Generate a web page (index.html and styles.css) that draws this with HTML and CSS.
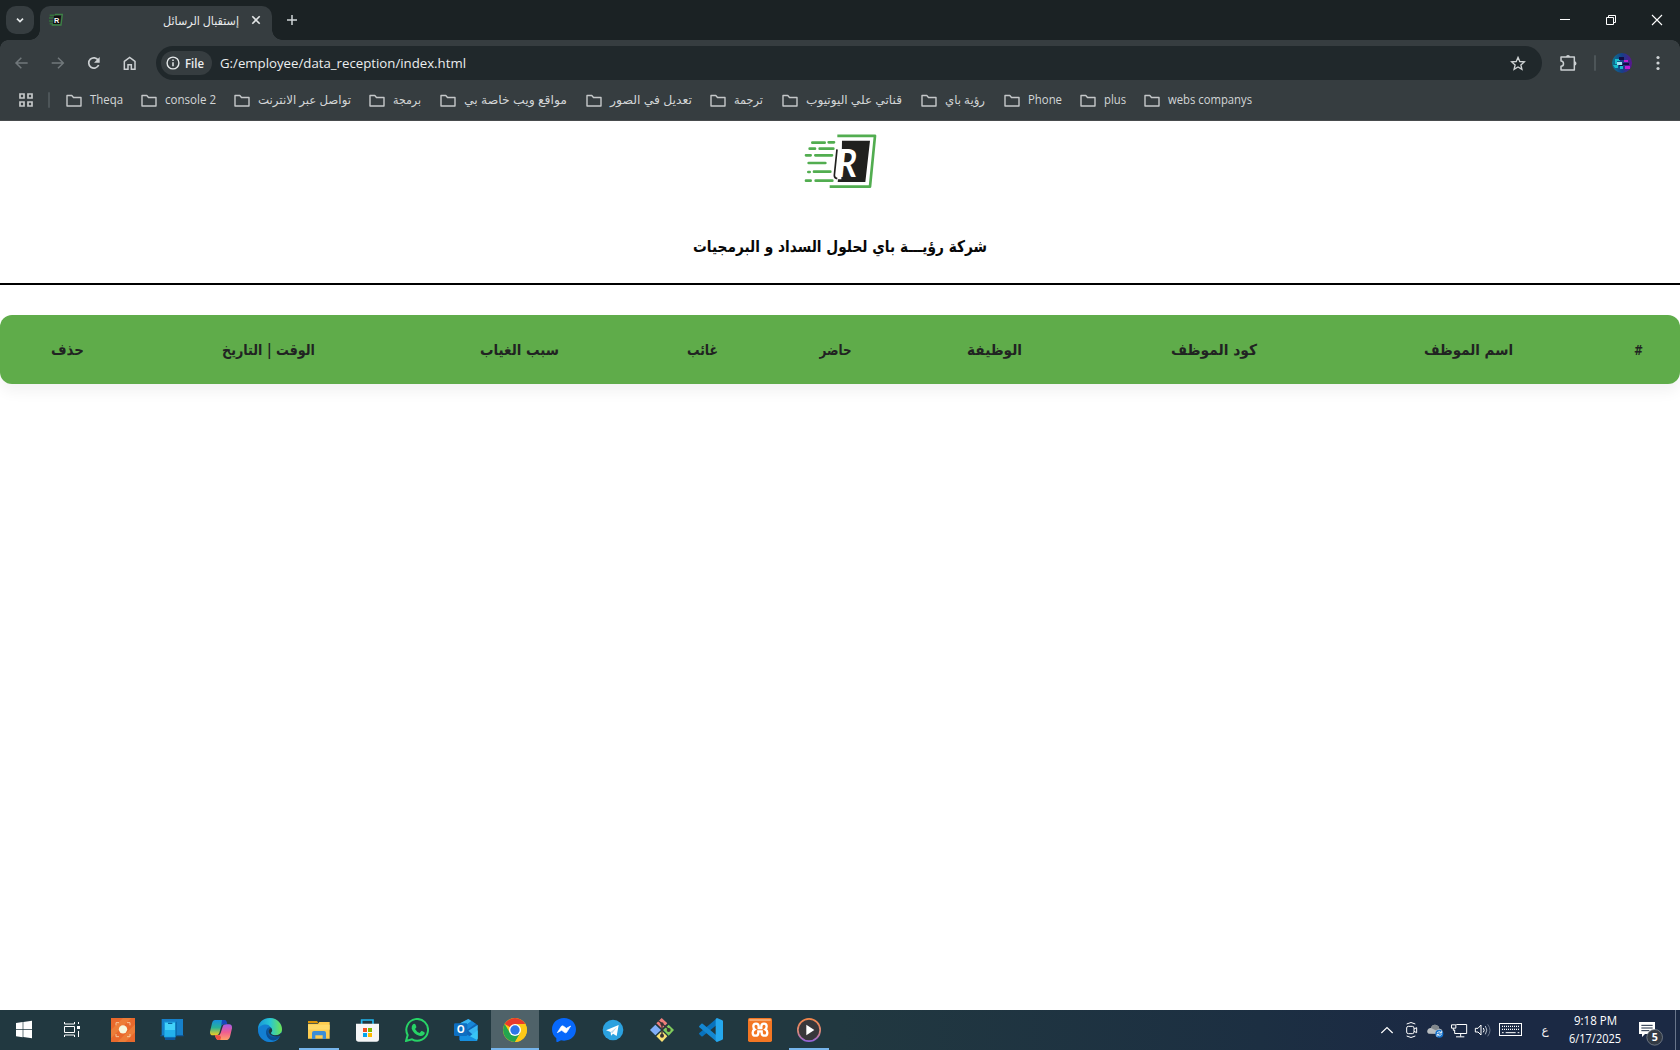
FILE: index.html
```
<!DOCTYPE html>
<html lang="ar">
<head>
<meta charset="utf-8">
<title>إستقبال الرسائل</title>
<link rel="stylesheet" href="styles.css">
</head>
<body>
<div class="titlebar">
  <button class="tab-search"><svg width="28" height="28" viewBox="18 18 84 84"><path d="M51 56l9 9 9-9" fill="none" stroke="#e4e8e9" stroke-width="5"/></svg></button>
  <div class="tab">
    <svg class="favicon" width="14" height="14" viewBox="148 40 42 42"><path d="M150 47h18M148 55h14M148 64h14M150 72h16" stroke="#35713d" stroke-width="5"/><path d="M166 44h22l-4 32h-28" fill="none" stroke="#3d8245" stroke-width="4"/><path d="M163 48h21l-3 25h-21z" fill="#111"/><text x="163" y="71" class="r-small">R</text></svg>
    <svg class="lbl title" width="76" height="22"><text x="0" y="15" textLength="76" lengthAdjust="spacingAndGlyphs">إستقبال الرسائل</text></svg>
    <svg class="close" width="10" height="10" viewBox="0 0 10 10"><path d="M1.300 1.300l7.400 7.400M8.700 1.300L1.300 8.700" stroke="#e2e5e6" stroke-width="1.600"/></svg>
  </div>
  <svg class="plus" width="12" height="12" viewBox="0 0 12 12"><path d="M6 1v10M1 6h10" stroke="#d1d6d8" stroke-width="1.500"/></svg>
  <div class="controls">
    <svg width="46" height="40"><path d="M18 19.500h10" stroke="#fff"/></svg>
    <svg width="46" height="40"><path d="M18.500 17.500h7v7h-7zM20.500 17v-1.500h7v7H26" fill="none" stroke="#fff"/></svg>
    <svg width="46" height="40"><path d="M18 15l10 10M28 15L18 25" stroke="#fff" stroke-width="1.100"/></svg>
  </div>
</div>

<div class="chrome-bars">
<div class="toolbar">
  <div class="nav">
    <svg width="36" height="36" viewBox="13 135 108 108"><path d="M84 189H50M65 173l-16 16 16 16" fill="none" stroke="#71787b" stroke-width="4.500"/></svg>
    <svg width="36" height="36" viewBox="121 135 108 108"><path d="M156 189h34M175 173l16 16-16 16" fill="none" stroke="#71787b" stroke-width="4.500"/></svg>
    <svg width="36" height="36" viewBox="229 135 108 108"><path d="M296 181A15.500 15.500 0 1 0 297 195" fill="none" stroke="#ccd0d2" stroke-width="5"/><path d="M300 171v17h-17z" fill="#ccd0d2"/></svg>
    <svg width="36" height="36" viewBox="337 135 108 108"><path d="M374 208v-24l16-12 16 12v24h-11v-14h-10v14z" fill="none" stroke="#ccd0d2" stroke-width="4.500"/></svg>
  </div>
  <div class="omnibox">
    <div class="chip"><svg width="14" height="14" viewBox="0 0 14 14"><circle cx="7" cy="7" r="5.900" fill="none" stroke="#e4e8e9" stroke-width="1.400"/><path d="M7 6.200v4M7 3.600v1.500" stroke="#e4e8e9" stroke-width="1.500"/></svg>
      <svg class="lbl file" width="19" height="18"><text x="0" y="13.500" textLength="19" lengthAdjust="spacingAndGlyphs">File</text></svg></div>
    <svg class="lbl url" width="246" height="22"><text x="0" y="16" textLength="246" lengthAdjust="spacingAndGlyphs">G:/employee/data_reception/index.html</text></svg>
    <svg class="star" width="16" height="16" viewBox="390 165 48 48"><path d="M414 172l5.300 12.500 13.700 1.200-10.400 9 3.200 13.300-11.800-7.100-11.800 7.100 3.200-13.300-10.400-9 13.700-1.200z" fill="none" stroke="#d0d4d5" stroke-width="4"/></svg>
  </div>
  <svg class="ext" width="18" height="18" viewBox="540 160 54 54"><path d="M543 169h40v39h-40v-11c10-1 10-15 0-16z" fill="none" stroke="#cbd0d2" stroke-width="4.500" stroke-linejoin="round"/><path d="M558 169a6 6 0 0 1 12 0zM583 182a6 6 0 0 1 0 13z" fill="#cbd0d2"/></svg>
  <i class="sep"></i>
  <svg class="avatar" width="20" height="20" viewBox="0 0 20 20"><defs><linearGradient id="av"><stop offset="0" stop-color="#0d7590"/><stop offset=".5" stop-color="#15418a"/><stop offset="1" stop-color="#5b1490"/></linearGradient></defs><circle cx="10" cy="10" r="10" fill="url(#av)"/><path d="M3 6h5v2H5v3H3zM1 12h5v3H3zM8 13h3v3H8z" fill="#16bccb"/><path d="M5 9h5v3H5z" fill="#9be4f2"/><path d="M12 7h4v2h-4zM13 13h5v3h-5z" fill="#c31bd3"/><path d="M7 4h5v3H7zM11 10h6v2h-6zM7 12h4v1H7z" fill="#120d45"/></svg>
  <svg class="dots" width="4" height="16"><g fill="#cfd3d5"><circle cx="2" cy="2.500" r="1.600"/><circle cx="2" cy="8" r="1.600"/><circle cx="2" cy="13.500" r="1.600"/></g></svg>
</div>

<svg class="defs"><symbol id="folder" viewBox="0 0 16 13"><path d="M1 1.500h4.800l1.700 2h7.500v8.500H1z" fill="none" stroke="#c5c8c9" stroke-width="1.400" stroke-linejoin="round"/></symbol></svg>
<div class="bookmarks">
  <svg width="14" height="14" viewBox="0 0 14 14"><path d="M1 1h4v4H1zM9 1h4v4H9zM1 9h4v4H1zM9 9h4v4H9z" fill="none" stroke="#c5c8c9" stroke-width="1.700"/></svg>
  <i class="sep"></i>
  <div class="bm"><svg width="16" height="13"><use href="#folder"/></svg><svg class="lbl" width="33" height="20"><text x="0" y="14" textLength="33" lengthAdjust="spacingAndGlyphs">Theqa</text></svg></div>
  <div class="bm"><svg width="16" height="13"><use href="#folder"/></svg><svg class="lbl" width="51" height="20"><text x="0" y="14" textLength="51" lengthAdjust="spacingAndGlyphs">console 2</text></svg></div>
  <div class="bm"><svg width="16" height="13"><use href="#folder"/></svg><svg class="lbl" width="93" height="20"><text x="0" y="14" textLength="93" lengthAdjust="spacingAndGlyphs">تواصل عبر الانترنت</text></svg></div>
  <div class="bm"><svg width="16" height="13"><use href="#folder"/></svg><svg class="lbl" width="29" height="20"><text x="0" y="14" textLength="28" lengthAdjust="spacingAndGlyphs">برمجة</text></svg></div>
  <div class="bm"><svg width="16" height="13"><use href="#folder"/></svg><svg class="lbl" width="104" height="20"><text x="0" y="14" textLength="103" lengthAdjust="spacingAndGlyphs">مواقع ويب خاصة بي</text></svg></div>
  <div class="bm"><svg width="16" height="13"><use href="#folder"/></svg><svg class="lbl" width="82" height="20"><text x="0" y="14" textLength="82" lengthAdjust="spacingAndGlyphs">تعديل في الصور</text></svg></div>
  <div class="bm"><svg width="16" height="13"><use href="#folder"/></svg><svg class="lbl" width="30" height="20"><text x="0" y="14" textLength="29" lengthAdjust="spacingAndGlyphs">ترجمة</text></svg></div>
  <div class="bm"><svg width="16" height="13"><use href="#folder"/></svg><svg class="lbl" width="97" height="20"><text x="0" y="14" textLength="96" lengthAdjust="spacingAndGlyphs">قناتي علي اليوتيوب</text></svg></div>
  <div class="bm"><svg width="16" height="13"><use href="#folder"/></svg><svg class="lbl" width="41" height="20"><text x="0" y="14" textLength="40" lengthAdjust="spacingAndGlyphs">رؤية باي</text></svg></div>
  <div class="bm"><svg width="16" height="13"><use href="#folder"/></svg><svg class="lbl" width="34" height="20"><text x="0" y="14" textLength="34" lengthAdjust="spacingAndGlyphs">Phone</text></svg></div>
  <div class="bm"><svg width="16" height="13"><use href="#folder"/></svg><svg class="lbl" width="22" height="20"><text x="0" y="14" textLength="22" lengthAdjust="spacingAndGlyphs">plus</text></svg></div>
  <div class="bm"><svg width="16" height="13"><use href="#folder"/></svg><svg class="lbl" width="85" height="20"><text x="0" y="14" textLength="84" lengthAdjust="spacingAndGlyphs">webs companys</text></svg></div>
</div>
</div>

<main>
  <header class="brand">
    <svg class="logo" width="76" height="58" viewBox="366 36 228 174">
      <g fill="none" stroke="#52ad50">
        <path d="M472 47.500H585L570 200H449" stroke-width="8" stroke-linejoin="round"/>
        <path stroke-width="8" stroke-linecap="round" d="M397 68h37M446 67h16M389 86h16M419 86h41M378 106h14M406 106h50M386 129h50M385 156h4M402 155h49M378 182h14M407 182h50"/>
      </g>
      <path d="M486 62H570L556 186H473L474 178H484z" fill="#20201e"/>
      <path d="M471 88l-8 78q0 9 9 10" fill="none" stroke="#20201e" stroke-width="5"/>
      <text class="r-big" transform="translate(467 172) skewX(-6)" textLength="60" lengthAdjust="spacingAndGlyphs">R</text>
    </svg>
    <svg class="company" width="296" height="32"><text x="1" y="22" textLength="294" lengthAdjust="spacingAndGlyphs">شركة رؤيـــة باي لحلول السداد و البرمجيات</text></svg>
  </header>
  <div class="thead">
    <div><svg width="9" height="26"><text class="hash" x="0" y="18" textLength="9" lengthAdjust="spacingAndGlyphs">#</text></svg></div>
    <div><svg width="89" height="26"><text x="0" y="18" textLength="89" lengthAdjust="spacingAndGlyphs">اسم الموظف</text></svg></div>
    <div><svg width="86" height="26"><text x="0" y="18" textLength="86" lengthAdjust="spacingAndGlyphs">كود الموظف</text></svg></div>
    <div><svg width="55" height="26"><text x="0" y="18" textLength="55" lengthAdjust="spacingAndGlyphs">الوظيفة</text></svg></div>
    <div><svg width="33" height="26"><text x="0.500" y="18" textLength="32" lengthAdjust="spacingAndGlyphs">حاضر</text></svg></div>
    <div><svg width="31" height="26"><text x="0" y="18" textLength="31" lengthAdjust="spacingAndGlyphs">غائب</text></svg></div>
    <div><svg width="79" height="26"><text x="0" y="18" textLength="79" lengthAdjust="spacingAndGlyphs">سبب الغياب</text></svg></div>
    <div><svg width="93" height="26"><text x="-1" y="18" textLength="93" lengthAdjust="spacingAndGlyphs">الوقت | التاريخ</text></svg></div>
    <div><svg width="33" height="26"><text x="0" y="18" textLength="33" lengthAdjust="spacingAndGlyphs">حذف</text></svg></div>
  </div>
</main>

<footer class="taskbar">
  <div class="cell"><svg width="24" height="24" viewBox="36 39 72 72"><path d="M48 54l20-3v22H48zM70 51l26-4v26H70zM48 75h20v22l-20-3zM70 75h26v25l-26-4z" fill="#fff"/></svg></div>
  <div class="cell view"><svg width="24" height="24" viewBox="180 39 72 72"><path d="M193.500 51v6h30v-6M193.500 64.500h30v18h-30zM193.500 96v-6h30v6M235.500 51v6M235.500 78v18" fill="none" stroke="#fff" stroke-width="3"/><path d="M231 63h9v9h-9z" fill="#fff"/></svg></div>
  <div class="cell"><svg width="24" height="24" viewBox="333 39 72 72"><path fill="#e9692c" d="M333 39h72v72h-72z"/><path d="M333 75l36-36h25l-61 61zM352 111l53-53v24l-29 29z" fill="#ed7d38"/><path d="M348 61v-8h9M381 53h9v8M348 87v8h9M381 95h9v-8" fill="none" stroke="#f6c79b" stroke-width="3"/><circle cx="369" cy="73" r="12.500" fill="#f6f8df"/></svg></div>
  <div class="cell"><svg width="24" height="24" viewBox="480 39 72 72"><path fill="#1680ca" d="M485 42h64v50h-64z"/><path fill="#0c559c" d="M481 91h70v3h-70zM495 94h31v11h-31z"/><path fill="#1a9bdd" d="M492 50h35v47h-35z"/><path fill="#42d1fa" d="M495 53h30v22h-30z"/><path fill="#23b1ed" d="M495 75h30v20h-30z"/><path fill="#0865a4" d="M527 50h3v42h-3zM504 53h13v4h-13z"/></svg></div>
  <div class="cell"><svg width="24" height="24" viewBox="627 39 72 72"><defs><linearGradient id="c1" x2="0" y2="1"><stop stop-color="#168edf"/><stop offset=".5" stop-color="#29b296"/><stop offset="1" stop-color="#f6ce20"/></linearGradient><linearGradient id="c2" x2="0" y2="1"><stop stop-color="#a65ce9"/><stop offset=".5" stop-color="#ef5c91"/><stop offset="1" stop-color="#ffa167"/></linearGradient></defs><path d="M645 45h25q8 0 11 13h-11q-5 0-7 8l-5 18q-2 7-10 7h-9q-10 0-9-11l6-25q3-10 9-10z" fill="url(#c1)"/><path d="M666 45h8q6 0 8 13h-12q-5 0-7 7z" fill="#1748bd"/><path d="M681 58h6q10 0 9 12l-6 25q-3 10-12 10h-23q-7 0-10-14h9q6 0 8-7l6-19q2-7 13-7z" fill="url(#c2)"/><path d="M645 91h12q4 0 6 6l-2 8h-6q-7 0-10-14z" fill="#ee5041"/></svg></div>
  <div class="cell"><svg width="24" height="24" viewBox="774 39 72 72"><defs><linearGradient id="e1"><stop stop-color="#1795d8"/><stop offset=".5" stop-color="#28c6d4"/><stop offset="1" stop-color="#6fe451"/></linearGradient></defs><circle cx="810" cy="75" r="36" fill="#0c5ba5"/><path d="M774 73C774 52 790 39 810 39c23 0 36 18 36 34 0 12-9 18-20 18-9 0-17-4-12-10 9-14-14-28-40-8z" fill="url(#e1)"/><path d="M774 73c5-15 32-20 36-7-11 3-16 14-8 27 8 12 21 12 35 6-9 12-22 13-30 12-20-2-33-18-33-38z" fill="#137fd2"/><path d="M809 66c-10 7-9 20 0 27 9 6 22 6 32-2q-5 9-13 14c-27 8-39-26-19-39z" fill="#0b4d91"/><path d="M813 69q7 7 1 13c-3 5 4 9 12 9 8 0 13-3 16-6l4 0v6l-5 2c-29 7-45-14-28-24z" fill="#203840"/></svg></div>
  <div class="cell open"><svg width="24" height="24" viewBox="921 39 72 72"><path d="M924 48h27l4 6h-31z" fill="#dc9506"/><path d="M924 56h30l4-5h31v50h-65z" fill="#fdcc50"/><path d="M924 59h65v15h-65z" fill="#ffda69"/><path d="M936 102V84q0-6 6-6h30q6 0 6 6v18h-10V91h-22v11z" fill="#3c8dd5"/></svg></div>
  <div class="cell"><svg width="24" height="24" viewBox="1068 39 72 72"><path d="M1085 60V45h34v15" fill="none" stroke="#20b5ed" stroke-width="5"/><path d="M1068 56h69v46q0 8-8 8h-53q-8 0-8-8z" fill="#f5f6f7"/><path fill="#f25022" d="M1089 69h12v12h-12z"/><path fill="#7fba00" d="M1104 69h12v12h-12z"/><path fill="#00a4ef" d="M1089 84h12v12h-12z"/><path fill="#ffb900" d="M1104 84h12v12h-12z"/></svg></div>
  <div class="cell"><svg width="24" height="24" viewBox="15 39 72 72"><path d="M18 108l5-18A32.500 32.500 0 1 1 36 103z" fill="none" stroke="#27d366" stroke-width="6"/><path d="M39 58q4-4 7 0l3 7q1 2-4 7 5 9 14 12l5-6q2-1 9 4 3 1 0 6-5 7-15 4-17-5-23-21-1-8 4-13z" fill="#27d366"/></svg></div>
  <div class="cell"><svg width="24" height="24" viewBox="162 39 72 72"><path d="M177 57l28-15 28 18-5 46h-51z" fill="#1065b6"/><path d="M180 55l25-13 10 6-26 20zM205 77l28-17v42z" fill="#37b5f2"/><path d="M215 48l12 8-27 20-13-8z" fill="#1686d8"/><path d="M190 108l43-32v25q0 7-7 7z" fill="#38c5f5"/><path d="M180 78l53 28-7 2h-46z" fill="#168fe0"/><rect x="162" y="55" width="40" height="38" rx="4" fill="#0e6fc1"/><text x="170" y="84" class="outlook">O</text></svg></div>
  <div class="cell open active"><svg width="24" height="24" viewBox="309 39 72 72"><circle cx="345" cy="75" r="36" fill="#fdc817"/><path d="M345 75L314 57A36 36 0 0 1 376 57h-31z" fill="#e93a2b"/><path d="M345 75l-15 9-16-27a36 36 0 0 0 31 54l16-27z" fill="#24a44f"/><path d="M345 57h31a36 36 0 0 1-31 54l16-27z" fill="#fdc817"/><circle cx="345" cy="75" r="18" fill="#fff"/><circle cx="345" cy="75" r="14" fill="#2d75e8"/></svg></div>
  <div class="cell"><svg width="24" height="24" viewBox="456 39 72 72"><path d="M492 39c21 0 36 15 36 34 0 22-19 38-45 33l-10 5q-4 1-4-3v-8c-8-6-13-15-13-27 0-19 15-34 36-34z" fill="#0768fb"/><path d="M472 83l12-19q3-3 7 0l8 6 13-7-12 19q-3 3-7 0l-8-6z" fill="#fff" stroke="#fff" stroke-width="2"/></svg></div>
  <div class="cell"><svg width="24" height="24" viewBox="603 39 72 72"><circle cx="639" cy="75" r="31" fill="#2ba1df"/><path d="M618 76l38-16-6 33-11-7-6 6-1-11z" fill="#fff"/><path d="M632 81l19-15-14 19z" fill="#bad9ea"/></svg></div>
  <div class="cell"><svg width="24" height="24" viewBox="750 39 72 72"><path fill="#f07e7b" d="M769 55l16-16 17 16-16 16z"/><path fill="#80aef9" d="M750 75l16-16 17 16-17 16z"/><path fill="#80cc5d" d="M789 75l17-16 16 16-16 17z"/><path fill="#fae274" d="M769 94l17-16 16 16-16 17z"/><path d="M775 47l34 28M786 55v39" fill="none" stroke="#3b3335" stroke-width="4"/><g fill="#3b3335"><circle cx="786" cy="57" r="5"/><circle cx="786" cy="92" r="6"/><circle cx="806" cy="75" r="6"/></g></svg></div>
  <div class="cell"><svg width="24" height="24" viewBox="897 39 72 72"><path d="M951 40v19l-43 35q-2 1-4 0l-6-6q-2-2 0-4z" fill="#0872bd"/><path d="M898 63q-2 2 0 4l53 44V92l-43-36q-2-1-4 0z" fill="#1487d1"/><path d="M951 39l16 7q2 1 2 3v52q0 2-2 3l-16 7-4-3V42z" fill="#25a7ed"/></svg></div>
  <div class="cell"><svg width="24" height="24" viewBox="1044 39 72 72"><rect x="1044" y="39" width="72" height="72" rx="5" fill="#f37623"/><path d="M1048 42h64v6h-64z" fill="#f8a76c"/><path d="M1068 56q-8 0-8 8 0 6 4 9-6 3-6 10 0 9 8.500 9 8.500 0 8.500-9v-4h10v4q0 9 8.500 9 8.500 0 8.500-9 0-7-6-10 4-3 4-9 0-8-8-8-8 0-8 8v5h-8v-5q0-8-8-8z" fill="none" stroke="#fff" stroke-width="7"/></svg></div>
  <div class="cell open"><svg width="24" height="24" viewBox="1191 39 72 72"><defs><linearGradient id="m1" x2="0" y2="1"><stop stop-color="#f1854a"/><stop offset=".6" stop-color="#d9877c"/><stop offset="1" stop-color="#9364d9"/></linearGradient></defs><circle cx="1227" cy="75" r="33.500" fill="#38373a" stroke="url(#m1)" stroke-width="5"/><path d="M1219 59l24 16-24 16z" fill="#fff"/></svg></div>

  <div class="tray">
    <svg width="146" height="40" viewBox="60 15 438 120">
      <path d="M64 84l17-16 17 16" fill="none" stroke="#fff" stroke-width="3.500"/>
      <g fill="none" stroke="#fff" stroke-width="3"><rect x="140" y="64" width="22" height="22" rx="5"/><path d="M162 72l8-4v15l-8-4M140 57q13-9 26 0M140 93q13 9 26 0"/></g>
      <path d="M206 86q-7-5-3-12 3-6 10-5 4-12 16-9 8 2 9 11 9 1 9 8v8z" fill="#b9bdc0"/><path d="M213 69q4-12 16-9 8 2 9 11l-11 5z" fill="#81878c"/><circle cx="238" cy="86" r="12" fill="#1774ce"/><path d="M231 84q6-8 13-1M245 88q-6 8-13 1M245 77v7h-7M231 95v-7h7" fill="none" stroke="#fff" stroke-width="2.500"/>
      <g fill="none" stroke="#fff" stroke-width="3"><path d="M289 58.500h31v27h-36V74M302 86v9M288 95.500h25M274.500 59.500h13v10h-13zM280 70v6h4"/><path d="M346 70h8l9-10v30l-9-9h-8zM370 69q5 7 0 13"/></g><path d="M376 63q9 12 0 25" fill="none" stroke="#b8c0cb" stroke-width="3"/><path d="M383 58q14 18 0 36" fill="none" stroke="#69758a" stroke-width="3"/>
      <rect x="418.500" y="55.500" width="66" height="36" fill="none" stroke="#fff" stroke-width="3"/><path d="M426 64h51M426 73h51" stroke="#fff" stroke-width="4" stroke-dasharray="3 3"/><path d="M426 83h5M437 83h30M473 83h5" stroke="#fff" stroke-width="3"/>
    </svg>
    <span class="lang">ع</span>
    <div class="clock">
      <svg class="lbl" width="52" height="18"><text x="5" y="13" textLength="43" lengthAdjust="spacingAndGlyphs">9:18 PM</text></svg>
      <svg class="lbl" width="52" height="18"><text x="0" y="13" textLength="52" lengthAdjust="spacingAndGlyphs">6/17/2025</text></svg>
    </div>
    <svg class="notif" width="26" height="40" viewBox="834 15 78 120"><path d="M837 51h48v36h-30l-9 9v-9h-9z" fill="#fff"/><path d="M844 61h34M844 69h34M844 77h24" stroke="#1c2b43" stroke-width="3"/><circle cx="884" cy="97" r="23.500" fill="#323a44" stroke="#8d949d" stroke-width="2"/><text x="875" y="109" class="count">5</text></svg>
    <i class="desk"></i>
  </div>
</footer>
</body>
</html>
```
FILE: styles.css
```
* { box-sizing: border-box; }
body { margin: 0; width: 1680px; height: 1050px; overflow: hidden; display: flex; flex-direction: column; background: #fff; font-family: "Open Sans", "DejaVu Sans", sans-serif; }
svg { display: block; flex: none; }
.defs { width: 0; height: 0; position: absolute; }
.lbl { overflow: visible; font-size: 12px; fill: #d3d6d7; }

.titlebar { height: 40px; flex: none; background: #1b2224; display: flex; align-items: flex-start; }
.tab-search { width: 28px; height: 28px; margin: 6px 6px 0 6px; padding: 0; border: 0; border-radius: 10px; background: #363d40; }
.tab { position: relative; width: 232px; height: 34px; margin-top: 6px; padding: 0 11px 0 9px; border-radius: 10px 10px 0 0; background: #363d40; display: flex; align-items: center; }
.tab::before, .tab::after { content: ""; position: absolute; bottom: 0; width: 10px; height: 10px; }
.tab::before { left: -10px; background: radial-gradient(circle at 0 0, transparent 9.5px, #363d40 10px); }
.tab::after { right: -10px; background: radial-gradient(circle at 100% 0, transparent 9.5px, #363d40 10px); }
.favicon { margin-bottom: 7px; }
.tab .title { margin: 0 12px 5px auto; fill: #e8eaeb; }
.close { margin: 0 0 7px; }
.plus { margin: 14px 0 0 14px; }
.controls { display: flex; margin-left: auto; }
.r-small { font: bold 22px "Liberation Sans", sans-serif; fill: #fff; }

.chrome-bars { height: 81px; flex: none; border-bottom: 1px solid #474b4d; background: radial-gradient(circle at 8px 8px, #363d40 7.5px, #1b2224 8px) 0 0 / 8px 8px no-repeat, radial-gradient(circle at 0 8px, #363d40 7.5px, #1b2224 8px) 100% 0 / 8px 8px no-repeat, #363d40; }
.toolbar { height: 46px; display: flex; align-items: center; padding: 0 14px 0 4px; }
.nav { display: flex; width: 152px; }
.omnibox { width: 1386px; height: 34px; border-radius: 17px; background: #20282b; display: flex; align-items: center; padding: 0 16px 0 5px; }
.chip { width: 51px; height: 24px; border-radius: 12px; background: #363d40; display: flex; align-items: center; gap: 5px; padding-left: 5px; }
.file { fill: #eceeef; font-weight: 600; }
.url { margin-left: 8px; font-size: 13.5px; fill: #eceeef; }
.star { margin-left: auto; }
.ext { margin-left: 18px; }
.sep { width: 2px; height: 16px; background: #4d5558; border-radius: 1px; }
.toolbar .sep { margin: 0 16px; }
.dots { margin-left: 24px; }
.bookmarks { height: 34px; display: flex; align-items: center; padding: 0 0 6px 19px; }
.bookmarks .sep { margin: 0 16px 0 15px; }
.bm { display: flex; align-items: center; gap: 8px; margin-right: 18px; }

main { flex: 1; }
.brand { height: 164px; border-bottom: 2px solid #000; display: flex; flex-direction: column; align-items: center; padding-top: 11px; }
.company { overflow: visible; margin-top: 40px; font: bold 16px "DejaVu Sans", sans-serif; fill: #080808; }
.r-big { font: bold 116px Lato, sans-serif; fill: #fff; }
.thead { direction: rtl; height: 69px; margin-top: 30px; border-radius: 12px; background: #5fac4a; box-shadow: 0 8px 14px rgba(0,0,0,.05); display: grid; grid-template-columns: 83px 257px 252px 187px 131px 135px 231px 269px 135px; align-items: center; justify-items: center; font: bold 15px "DejaVu Sans", sans-serif; fill: #212322; }
.thead svg { direction: ltr; overflow: visible; }
.hash { font-size: 14px; }

.taskbar { height: 40px; flex: none; display: flex; background: linear-gradient(90deg, #213840 0%, #213840 50%, #1c2f42 75%, #1b2944 86%, #1b2944 100%); }
.cell { width: 48px; height: 40px; margin-right: 1px; display: flex; align-items: center; justify-content: center; flex: none; }
.cell:first-child { margin-right: 0; }
.cell.view { margin-right: 3px; }
.open { background: linear-gradient(#76b5ec, #76b5ec) center bottom / 40px 2px no-repeat; }
.active { background: linear-gradient(#76b5ec, #76b5ec) bottom / 48px 2px no-repeat, #4f6269; }
.outlook { font: bold 30px "Open Sans", sans-serif; fill: #fff; }
.tray { margin-left: auto; display: flex; align-items: center; }
.lang { width: 12px; margin-left: 13px; text-align: center; color: #f2f2f2; font: 12px "DejaVu Sans", sans-serif; }
.clock { margin-left: 18px; }
.clock .lbl { fill: #fff; }
.notif { margin-left: 17px; }
.count { font: bold 32px "Open Sans", sans-serif; fill: #fff; }
.desk { width: 1px; height: 40px; margin: 0 4px 0 11px; background: #69758a; }
```
